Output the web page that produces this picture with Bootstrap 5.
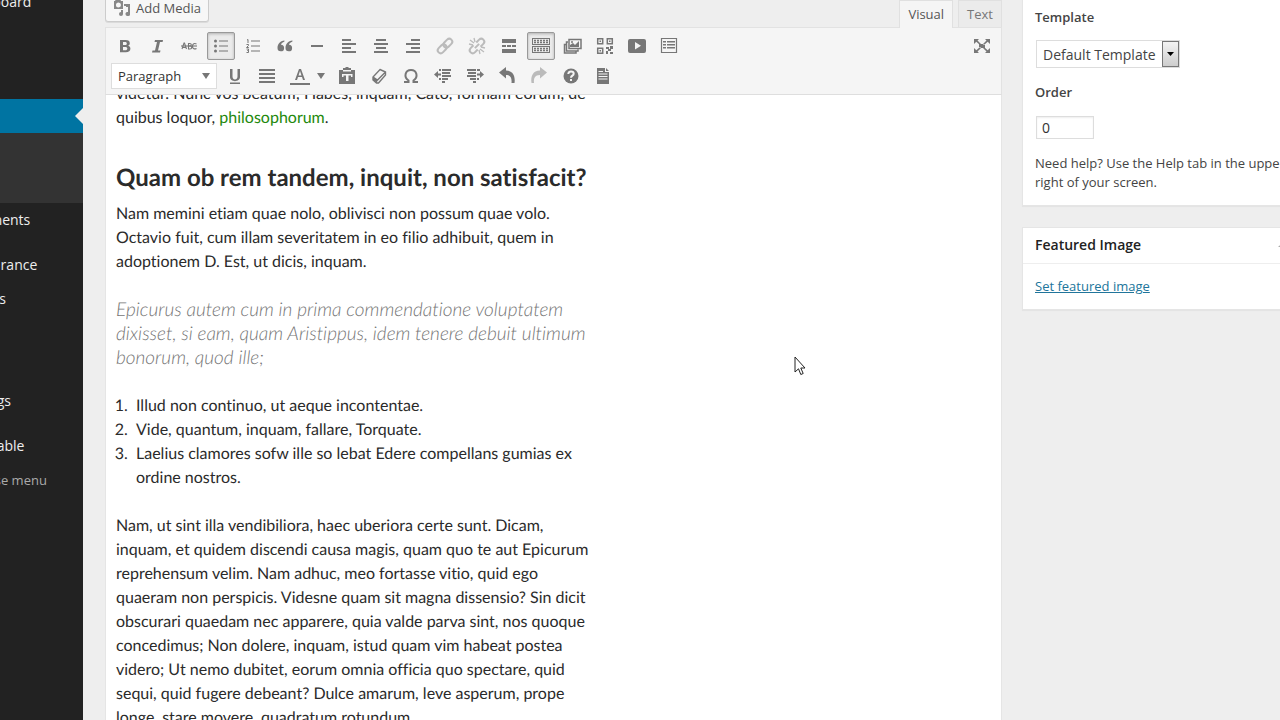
<!DOCTYPE html>
<html lang="en">
<head>
<meta charset="utf-8">
<meta name="viewport" content="width=device-width, initial-scale=1">
<title>Edit Page</title>
<link href="https://cdn.jsdelivr.net/npm/bootstrap@5.3.0/dist/css/bootstrap.min.css" rel="stylesheet">
<style>
body{background:#eee;color:#444;font:13px/19px "Open Sans",sans-serif}
/* Admin menu: scrolled past the window's left edge */
.admin-menu{flex:0 0 160px;margin-left:-77px;background:#222}
.admin-menu ul{margin-top:-15px}
.admin-menu a{display:block;height:34px;padding-left:36px;color:#eee;font-size:14px;line-height:34px;text-decoration:none;white-space:nowrap}
.admin-menu .menu-break{margin-top:11px}
.admin-menu .menu-skip{margin-top:68px}
.admin-menu .collapse-link{padding-left:34px;color:#aaa;font-size:13px}
.current-page{height:34px;margin-top:80px;background:#0074a2}
.current-page::after{content:"";position:absolute;right:0;top:9px;border:8px solid transparent;border-left:0;border-right-color:#eee}
.current-sub{height:70px;background:#333}
/* Editor */
.editor-col{min-width:0;margin:0 20px 0 22px}
.media-btn{height:28px;margin-top:-6px;padding:0 7px 0 6px;border:1px solid #ccc;border-radius:3px;background:#f7f7f7;color:#555;font-size:13px;line-height:26px;box-shadow:0 1px 0 rgba(0,0,0,.08)}
.mode-tab{height:27px;padding:0 8px;border:1px solid #e0e0e0;border-bottom:0;background:#ebebeb;color:#777;font-size:13px;line-height:25px}
.mode-tab.active{height:28px;margin-bottom:-1px;background:#f5f5f5;color:#555;position:relative}
.tab-set{gap:5px}
.tool-area{padding:3px 5px;background:#f5f5f5;border:1px solid #e2e2e2;border-bottom-color:#dedede;height:68px}
.tool-row{height:30px;gap:4px}
.tool{width:28px;height:28px;padding:0;border:1px solid transparent;border-radius:2px;background:none;color:#777;display:flex;align-items:center;justify-content:center}
.tool svg,.media-btn svg{width:20px;height:20px;fill:currentColor;flex:none}
.media-btn svg{color:#888}
.tool.pressed{background:#ebebeb;border-color:#999;box-shadow:inset 0 1px 3px rgba(0,0,0,.25)}
.tool.dim{color:#bbb}
.tool-color{width:44px;padding-left:4px;justify-content:flex-start}
.tool .caret-mark{width:18px}
.format-pick{width:106px;height:26px;padding:0 6px;border:1px solid #ddd;border-radius:0;appearance:none;color:#333;font-size:13px;background:#fff url("data:image/svg+xml,%3Csvg xmlns='http://www.w3.org/2000/svg' width='8' height='6'%3E%3Cpath d='M0 0h8L4 6z' fill='%23777'/%3E%3C/svg%3E") no-repeat right 6px center}
.canvas-area{background:#fff;border:solid #e5e5e5;border-width:0 1px;color:#2b2b2b;font:16px/24px Lato,sans-serif;text-rendering:geometricPrecision;font-variant-ligatures:none}
.doc{max-width:494px;padding:0 10px;margin-top:-13px}
.doc p,.doc ol{margin-bottom:24px}
.doc a{color:#24890d;text-decoration:none}
.doc h2{margin:36px 0 12px;font-size:24px;line-height:24px;font-weight:700}
.doc blockquote{margin-bottom:24px;color:#767676;font-size:19px;line-height:24px;font-style:italic;font-weight:300}
.doc ol{padding-left:16px}
.doc li{padding-left:4px}
/* Side boxes */
.side-col{flex:0 0 280px;margin-right:-22px}
.side-box{background:#fff;border:1px solid #e5e5e5;box-shadow:0 1px 1px rgba(0,0,0,.04)}
.attr-box{margin-top:-1px;padding:8px 12px 13px;margin-bottom:21px}
.attr-box label{display:block;font-weight:600}
.template-pick{display:block;width:144px;height:28px;margin:13px 0 15px 1px;padding:0 0 0 6px;border:1px solid #ddd;border-radius:0;appearance:none;color:#444;font-size:14px;background:#fff url("data:image/svg+xml,%3Csvg xmlns='http://www.w3.org/2000/svg' width='17' height='26'%3E%3Cdefs%3E%3ClinearGradient id='g' x2='0' y2='1'%3E%3Cstop stop-color='%23f4f4f4'/%3E%3Cstop offset='1' stop-color='%23ccc'/%3E%3C/linearGradient%3E%3C/defs%3E%3Crect x='.5' y='.5' width='16' height='25' fill='url(%23g)' stroke='%23777'/%3E%3Cpath d='M5 11h7l-3.500 4z'/%3E%3C/svg%3E") no-repeat right center}
.order-box{display:block;width:58px;height:23px;margin:14px 0 15px 1px;padding:0 5px;border:1px solid #ddd;color:#333;font-size:14px;box-shadow:inset 0 1px 2px rgba(0,0,0,.07)}
.side-box h2{margin:0;padding:0 12px 2px;height:36px;border-bottom:1px solid #eee;color:#222;font-size:14px;line-height:33px;font-weight:600}
.side-box .body-pad{padding:13px 12px}
.side-box a{color:#21759b}
.fold-mark{width:11px;height:5px;fill:#aaa}
.pointer{left:794px;top:356px;width:12px;height:20px}
</style>
</head>
<body class="d-flex vh-100 overflow-hidden">
<nav class="admin-menu" aria-label="Admin menu">
<ul class="list-unstyled mb-0">
<li><a href="#">Dashboard</a></li>
<li class="current-page position-relative"></li>
<li class="current-sub"></li>
<li><a href="#">Comments</a></li>
<li class="menu-break"><a href="#">Appearance</a></li>
<li><a href="#">Plugins</a></li>
<li class="menu-skip"><a href="#">Settings</a></li>
<li class="menu-break"><a href="#">Shareable</a></li>
<li><a class="collapse-link" href="#">Collapse menu</a></li>
</ul>
</nav>
<main class="editor-col flex-grow-1 d-flex flex-column">
<div class="d-flex justify-content-between align-items-start">
<button type="button" class="media-btn d-flex align-items-center gap-1"><svg viewBox="0 0 20 20"><path fill-rule="evenodd" d="M2 3h1l1-2h4l1 2h2v8H2zM6.500 4.500a2.500 2.500 0 1 0 0 5 2.500 2.500 0 0 0 0-5z"/><path d="M12 6h6v10a2.300 2 0 1 1-2-2V9h-2v-1h-2z"/><circle cx="16" cy="16" r="2"/><circle cx="9" cy="16" r="2"/><path d="M9 12h2v4H9z"/></svg>Add Media</button>
<div class="tab-set d-flex align-items-end">
<button type="button" class="mode-tab active">Visual</button>
<button type="button" class="mode-tab">Text</button>
</div>
</div>
<div class="tool-area">
<div class="tool-row d-flex align-items-center">
<button type="button" class="tool" aria-label="Bold"><svg viewBox="0 0 20 20"><path fill-rule="evenodd" d="M5 4h5.500c3 0 4.300 1.200 4.300 3.200 0 1.400-.8 2.300-2 2.600 1.700.3 2.600 1.300 2.600 3 0 2.200-1.600 3.500-4.600 3.500H5zm3 2v3h2c1.200 0 1.800-.5 1.800-1.500S11.200 6 10 6zm0 4.900v3.400h2.200c1.400 0 2.100-.6 2.100-1.800 0-1.100-.7-1.600-2.100-1.600z"/></svg></button>
<button type="button" class="tool" aria-label="Italic"><svg viewBox="0 0 20 20"><path d="M8 4h8l-.4 2H13l-2 8.500h2.500L13 16.500H5l.5-2H8L10 6H7.500z"/></svg></button>
<button type="button" class="tool" aria-label="Strikethrough"><svg viewBox="0 0 20 20"><g fill="none" stroke="currentColor" stroke-width="1.100"><path d="M3 13l2-6h.5l2 6M3.500 11.500h3M9.500 7.500v5.500h1.500c2.300 0 2.300-3 0-3H9.500h1.300c2 0 2-2.500 0-2.500zM17.500 8c-1.800-1-4-.5-4 2.200s2.200 3.200 4 2.200"/><path d="M2 10h16"/></g></svg></button>
<button type="button" class="tool pressed" aria-label="Bulleted list"><svg viewBox="0 0 20 20"><circle cx="4.500" cy="5" r="1.500"/><circle cx="4.500" cy="10" r="1.500"/><circle cx="4.500" cy="15" r="1.500"/><path d="M8 4.500h9v1H8zM8 9.500h9v1H8zM8 14.500h9v1H8z"/></svg></button>
<button type="button" class="tool" aria-label="Numbered list"><svg viewBox="0 0 20 20"><path d="M8 4.500h9v1H8zM8 9.500h9v1H8zM8 14.500h9v1H8z"/><path fill="none" stroke="currentColor" stroke-width="1" d="M4 4l1-.5V7M3.500 8.500h2v1l-2 2h2.300M3.500 13h2v1.500h-1 1V16.500h-2"/></svg></button>
<button type="button" class="tool" aria-label="Quote"><svg viewBox="0 0 20 20"><path d="M9.500 4.500C5 5 2.500 8 2.500 12a3.300 3.300 0 1 0 3.500-3.300c.2-1.500 1.500-2.500 3.300-3zM17.500 4.500c-4.500.5-7 3.500-7 7.500a3.300 3.300 0 1 0 3.500-3.300c.2-1.500 1.500-2.500 3.300-3z"/></svg></button>
<button type="button" class="tool" aria-label="Horizontal line"><svg viewBox="0 0 20 20"><path d="M4 9h12v2H4z"/></svg></button>
<button type="button" class="tool" aria-label="Align left"><svg viewBox="0 0 20 20"><path d="M3 3h9v2H3zM3 7h14v2H3zM3 11h9v2H3zM3 15h14v2H3z"/></svg></button>
<button type="button" class="tool" aria-label="Align center"><svg viewBox="0 0 20 20"><path d="M5 3h10v2H5zM3 7h14v2H3zM5 11h10v2H5zM3 15h14v2H3z"/></svg></button>
<button type="button" class="tool" aria-label="Align right"><svg viewBox="0 0 20 20"><path d="M8 3h9v2H8zM3 7h14v2H3zM8 11h9v2H8zM3 15h14v2H3z"/></svg></button>
<button type="button" class="tool dim" aria-label="Insert link"><svg viewBox="0 0 20 20"><g fill="none" stroke="currentColor" stroke-width="2" transform="rotate(-45 10 10)"><rect x="1" y="7" width="10" height="6" rx="3"/><rect x="9" y="7" width="10" height="6" rx="3"/></g></svg></button>
<button type="button" class="tool dim" aria-label="Remove link"><svg viewBox="0 0 20 20"><g fill="none" stroke="currentColor" stroke-width="2"><g transform="rotate(-45 10 10)"><path d="M8 7H4a3 3 0 0 0 0 6h4M12 7h4a3 3 0 0 1 0 6h-4M7 10h6"/></g><path stroke-width="1.300" d="M3 4l4 3M7 2l1 4M2 8l4 1M17 16l-4-3M13 18l-1-4M18 12l-4-1"/></g></svg></button>
<button type="button" class="tool" aria-label="Read more"><svg viewBox="0 0 20 20"><path d="M3 3h14v4H3zM3 9h4v2H3zM8 9h4v2H8zM13 9h4v2h-4zM3 13h14v4H3z"/></svg></button>
<button type="button" class="tool pressed" aria-label="Toolbar toggle"><svg viewBox="0 0 20 20"><path fill-rule="evenodd" d="M1 2h18v7H1zm1 1v5h16V3zM1 10h18v7H1zm1 1v5h16v-5z"/><g stroke="currentColor" stroke-width="1.500" stroke-dasharray="2 1"><path d="M3 4.500h14M3 6.500h14M3 12.500h14M3 14.500h14"/></g></svg></button>
<button type="button" class="tool" aria-label="Gallery"><svg viewBox="0 0 20 20"><path fill="none" stroke="currentColor" stroke-width="1.500" d="M6 3.500h12v9H6zM5 6H3.500v9H15v-1.500M3 8.500H1.500V17H13v-1.500"/><path d="M7 11V9l3-2 2 2 4-4v6z"/><circle cx="9" cy="6" r="1"/></svg></button>
<button type="button" class="tool" aria-label="Code"><svg viewBox="0 0 20 20"><path fill="none" stroke="currentColor" stroke-width="1.500" d="M2.700 2.700h5v5h-5zM12.300 2.700h5v5h-5zM2.700 12.300h5v5h-5z"/><path d="M4.500 4.500h1.500v1.500H4.500zM14 4.500h1.500v1.500H14zM4.500 14h1.500v1.500H4.500zM11 11h3v2h-3zM15 10h3v3h-2v2h-3v3h-2v-3h2v-2h2zM15 16h3v2h-3z"/></svg></button>
<button type="button" class="tool" aria-label="Video"><svg viewBox="0 0 20 20"><path fill-rule="evenodd" d="M3 3h14a2 2 0 0 1 2 2v10a2 2 0 0 1-2 2H3a2 2 0 0 1-2-2V5a2 2 0 0 1 2-2zm5 3v7.500l6-3.700z"/></svg></button>
<button type="button" class="tool" aria-label="Table"><svg viewBox="0 0 20 20"><path fill="none" stroke="currentColor" stroke-width="1.200" d="M2.500 2.500h15v14h-15z"/><path d="M4 5h3v1.500H4zM8 5h8v1.500H8zM4 8h3v1.500H4zM8 8h8v1.500H8zM4 11h3v1.500H4zM8 11h8v1.500H8z"/></svg></button>
<button type="button" class="tool ms-auto" aria-label="Fullscreen"><svg viewBox="0 0 20 20"><path d="M7 8h6v4H7zM2 3h5L5.500 4.500 9 8l-1 1-3.700-3.200L2 8zM18 3h-5l1.500 1.500L11 8l1 1 3.700-3.200L18 8zM2 17h5l-1.500-1.500L9 12l-1-1-3.700 3.200L2 12zM18 17h-5l1.500-1.500L11 12l1-1 3.700 3.200L18 12z"/></svg></button>
</div>
<div class="tool-row d-flex align-items-center">
<select class="format-pick" aria-label="Block format"><option>Paragraph</option></select>
<button type="button" class="tool" aria-label="Underline"><svg viewBox="0 0 20 20"><path d="M5 3h2.500v7.500c0 4 5 4 5 0V3H15v8c0 5.500-10 5.500-10 0zM5 16.500h10V18H5z"/></svg></button>
<button type="button" class="tool" aria-label="Justify"><svg viewBox="0 0 20 20"><path d="M2 3h16v2H2zM2 7h16v2H2zM2 11h16v2H2zM2 15h16v2H2z"/></svg></button>
<button type="button" class="tool tool-color" aria-label="Text color"><svg viewBox="0 0 20 20"><path fill-rule="evenodd" d="M9 3h2l4 11h-2l-1-3H8l-1 3H5zm-.5 6.500h3L10 5zM0 17h20v2H0z"/></svg><svg class="caret-mark" viewBox="0 0 18 20"><path d="M7 7h8l-4 6z"/></svg></button>
<button type="button" class="tool" aria-label="Paste as text"><svg viewBox="0 0 20 20"><path fill-rule="evenodd" d="M2 4h4V2h2l1-1h2l1 1h2v2h4v14H2zm4 0v1.500h8V4zm-1 4v3h1.500V9.500h2.500V15h2.500V9.500H14V11h1.500V8z"/></svg></button>
<button type="button" class="tool" aria-label="Clear formatting"><svg viewBox="0 0 20 20"><path fill="none" stroke="currentColor" stroke-width="1.400" d="M11 3.500l5.500 2.500v3L9.500 17H7.500L4 14v-3zM4 11l4.500 3 8-8"/><path d="M4 11l4.500 3L8 17l-4-3z"/></svg></button>
<button type="button" class="tool" aria-label="Special character"><svg viewBox="0 0 20 20"><path fill="none" stroke="currentColor" stroke-width="2" d="M3 16h4.500v-1.500c-5-3.500-3.500-10.500 2.500-10.500s7.500 7 2.500 10.500V16H17"/></svg></button>
<button type="button" class="tool" aria-label="Decrease indent"><svg viewBox="0 0 20 20"><path d="M9 3h9v2H9zM6 3h2v2H6zM9 6h8v2H9zM9 9h9v2H9zM9 12h6v2H9zM6 12h2v2H6zM9 15h3v2H9zM1 8.500L5 5v2.500h3v2H5V12z"/></svg></button>
<button type="button" class="tool" aria-label="Increase indent"><svg viewBox="0 0 20 20"><path d="M2 3h9v2H2zM12 3h3v2h-3zM3 6h8v2H3zM2 9h9v2H2zM5 12h6v2H5zM12 12h2v2h-2zM8 15h3v2H8zM19 8.500L15 5v2.500h-3v2h3V12z"/></svg></button>
<button type="button" class="tool" aria-label="Undo"><svg viewBox="0 0 20 20"><path d="M2 6.500L9 1v3.500c7 0 9.500 5.500 8.500 12.500h-3c.5-5-1-8-5.500-8v3.500z"/></svg></button>
<button type="button" class="tool dim" aria-label="Redo"><svg viewBox="0 0 20 20"><path d="M18 6.500L11 1v3.500C4 4.500 1.500 10 2.500 17h2.500c-.5-5 1-8 6-8v3.500z"/></svg></button>
<button type="button" class="tool" aria-label="Help"><svg viewBox="0 0 20 20"><circle cx="10" cy="10" r="7.500"/><path fill="none" stroke="#f5f5f5" stroke-width="2" d="M7.300 8c0-3.500 5.400-3 5.400-.3 0 2-2.700 1.800-2.700 4M10 13v2"/></svg></button>
<button type="button" class="tool" aria-label="Page template"><svg viewBox="0 0 20 20"><path fill-rule="evenodd" d="M4 2h8v4h4v12H4zm9 0l3 3h-3zM5.500 5v1H10V5zm0 2.500v1h9v-1zm0 2.500v1h9v-1zm0 2.500v1h9v-1z"/></svg></button>
</div>
</div>
<div class="canvas-area flex-grow-1 overflow-hidden">
<article class="doc">
<p>videtur. Nunc vos beatum; Habes, inquam, Cato, formam eorum, de quibus loquor, <a href="#">philosophorum</a>.</p>
<h2>Quam ob rem tandem, inquit, non satisfacit?</h2>
<p>Nam memini etiam quae nolo, oblivisci non possum quae volo. Octavio fuit, cum illam severitatem in eo filio adhibuit, quem in adoptionem D. Est, ut dicis, inquam.</p>
<blockquote>Epicurus autem cum in prima commendatione voluptatem dixisset, si eam, quam Aristippus, idem tenere debuit ultimum bonorum, quod ille;</blockquote>
<ol>
<li>Illud non continuo, ut aeque incontentae.</li>
<li>Vide, quantum, inquam, fallare, Torquate.</li>
<li>Laelius clamores sofw ille so lebat Edere compellans gumias ex ordine nostros.</li>
</ol>
<p>Nam, ut sint illa vendibiliora, haec uberiora certe sunt. Dicam, inquam, et quidem discendi causa magis, quam quo te aut Epicurum reprehensum velim. Nam adhuc, meo fortasse vitio, quid ego quaeram non perspicis. Videsne quam sit magna dissensio? Sin dicit obscurari quaedam nec apparere, quia valde parva sint, nos quoque concedimus; Non dolere, inquam, istud quam vim habeat postea videro; Ut nemo dubitet, eorum omnia officia quo spectare, quid sequi, quid fugere debeant? Dulce amarum, leve asperum, prope longe, stare movere, quadratum rotundum.</p>
</article>
</div>
</main>
<aside class="side-col">
<section class="side-box attr-box">
<label for="template">Template</label>
<select id="template" class="template-pick"><option>Default Template</option></select>
<label for="order">Order</label>
<input id="order" class="order-box" type="text" value="0">
<p class="mb-0">Need help? Use the Help tab in the upper right of your screen.</p>
</section>
<section class="side-box">
<h2 class="d-flex justify-content-between align-items-center">Featured Image<svg class="fold-mark" viewBox="0 0 11 5"><path d="M0 5h11L5.500 0z"/></svg></h2>
<div class="body-pad"><a href="#">Set featured image</a></div>
</section>
</aside>
<svg class="pointer position-absolute" viewBox="0 0 12 20" aria-hidden="true"><path d="M1 1v15l3.500-3.200 2.300 5.700 2.400-1-2.400-5.500H11z" fill="#fff" stroke="#222"/></svg>
<script src="https://cdn.jsdelivr.net/npm/bootstrap@5.3.0/dist/js/bootstrap.bundle.min.js"></script>
</body>
</html>
